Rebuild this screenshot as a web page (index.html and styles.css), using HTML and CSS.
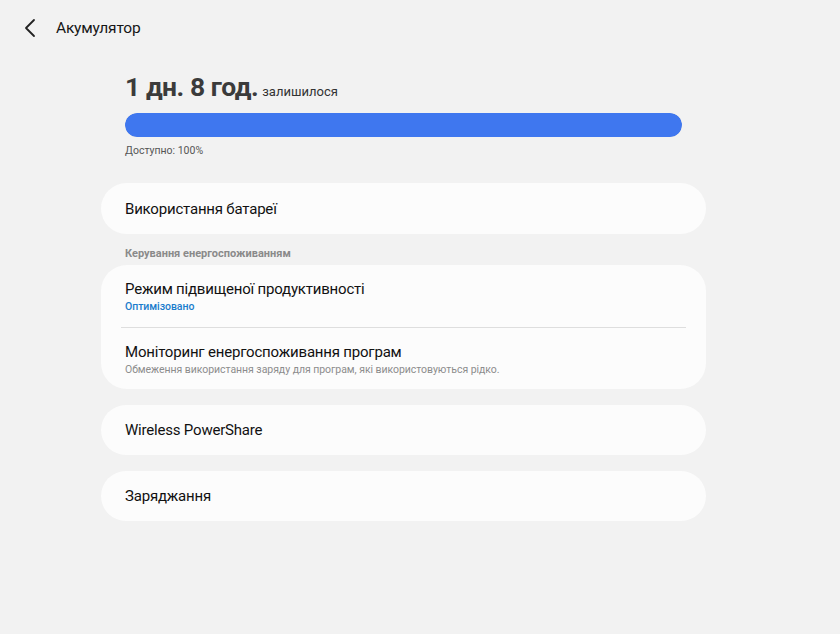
FILE: index.html
```html
<!DOCTYPE html>
<html lang="uk">
<head>
<meta charset="utf-8">
<link rel="stylesheet" href="styles.css">
</head>
<body>
<header class="topbar">
  <span class="back">
    <svg width="14" height="20" viewBox="0 0 14 20"><path d="M10 2 L2 10 L10 18" fill="none" stroke="#222" stroke-width="1.8" stroke-linecap="round" stroke-linejoin="round"/></svg>
  </span>
  <h1 class="title">Акумулятор</h1>
</header>
<main class="content">
  <section class="summary">
    <div class="headline"><span class="time">1 дн. 8 год.</span> <span class="left">залишилося</span></div>
    <div class="bar"><div class="bar-fill" style="width:100%"></div></div>
    <div class="avail">Доступно: 100%</div>
  </section>

  <div class="card single first"><span class="item-title">Використання батареї</span></div>

  <div class="section-label">Керування енергоспоживанням</div>

  <div class="card group">
    <div class="item">
      <div class="item-title">Режим підвищеної продуктивності</div>
      <div class="item-sub blue">Оптимізовано</div>
    </div>
    <div class="divider"></div>
    <div class="item last">
      <div class="item-title">Моніторинг енергоспоживання програм</div>
      <div class="item-sub">Обмеження використання заряду для програм, які використовуються рідко.</div>
    </div>
  </div>

  <div class="card single gap"><span class="item-title">Wireless PowerShare</span></div>
  <div class="card single gap"><span class="item-title">Заряджання</span></div>
</main>
</body>
</html>
```
FILE: styles.css
```css
* { box-sizing: border-box; }
html, body { margin: 0; padding: 0; }
body {
  background: #f2f2f2;
  font-family: Roboto, "Noto Sans", sans-serif;
  color: #111;
  width: 840px;
  height: 634px;
  overflow: hidden;
}
.topbar {
  height: 56px;
  display: flex;
  align-items: center;
  padding-left: 24px;
}
.back {
  width: 14px;
  height: 20px;
  display: flex;
  margin-right: 18px;
}
.title {
  margin: 0;
  font-size: 15.5px;
  font-weight: 400;
  letter-spacing: -0.2px;
  color: #161616;
}
.content {
  width: 605px;
  margin-left: 101px;
}
.summary {
  padding: 0 24px;
}
.headline {
  margin-top: 15px;
  height: 32px;
  line-height: 32px;
  white-space: nowrap;
}
.time {
  font-size: 26.5px;
  font-weight: 700;
  color: #3b3b3b;
  letter-spacing: -0.45px;
}
.left {
  font-size: 13px;
  color: #333;
}
.bar {
  margin-top: 10px;
  height: 24px;
  border-radius: 12px;
  background: #dcdcdc;
  overflow: hidden;
}
.bar-fill {
  height: 100%;
  background: #3f77ef;
  border-radius: 12px;
}
.avail {
  margin-top: 7px;
  font-size: 10.5px;
  line-height: 14px;
  color: #555;
}
.card {
  background: #fcfcfc;
  border-radius: 26px;
}
.card.single {
  height: 50px;
  display: flex;
  align-items: center;
  padding: 0 24px;
}
.card.first { margin-top: 25px; height: 51px; }
.card.gap { margin-top: 16px; }
.item-title {
  font-size: 15px;
  line-height: 20px;
  letter-spacing: -0.2px;
  color: #111;
}
.section-label {
  margin-top: 12px;
  padding-left: 24px;
  font-size: 11px;
  font-weight: 700;
  line-height: 16px;
  color: #8a8a8a;
}
.card.group {
  margin-top: 3px;
  padding: 0 20px;
}
.item {
  padding: 14px 4px 13px;
  height: 62px;
}
.item.last {
  height: 61px;
}
.item-sub {
  font-size: 10.5px;
  line-height: 14px;
  letter-spacing: -0.05px;
  color: #8c8c8c;
  margin-top: 1px;
}
.item-sub.blue {
  color: #1b7ccc;
  font-weight: 500;
}
.divider {
  height: 1px;
  background: #dedede;
}
```
